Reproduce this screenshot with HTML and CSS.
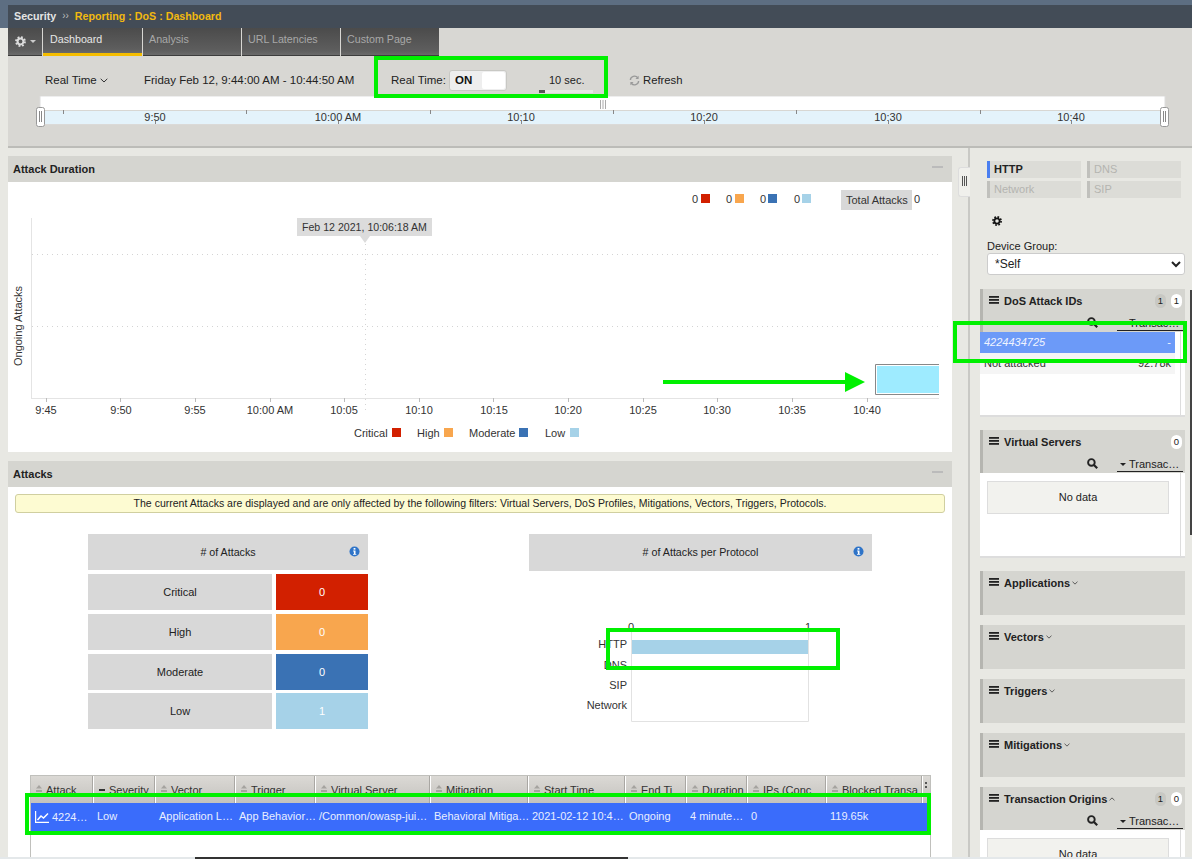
FILE: index.html
```html
<!DOCTYPE html>
<html>
<head>
	<meta charset="utf-8">
	<title>Security - Reporting : DoS : Dashboard</title>
	<link rel="stylesheet" href="styles.css">
</head>
<body>
<svg class="sprite">
	<symbol id="gear" viewBox="0 0 12 12">
		<circle cx="6" cy="6" r="3.2" fill="none" stroke="currentColor" stroke-width="2.2"/>
		<circle cx="6" cy="6" r="4.9" fill="none" stroke="currentColor" stroke-width="2" stroke-dasharray="2 1.85"/>
	</symbol>
	<symbol id="bars" viewBox="0 0 10 8">
		<rect width="10" height="1.8" y="0"/><rect width="10" height="1.8" y="3"/><rect width="10" height="1.8" y="6"/>
	</symbol>
	<symbol id="search" viewBox="0 0 11 11">
		<circle cx="4.4" cy="4.4" r="3.3" fill="none" stroke="currentColor" stroke-width="1.9"/>
		<path d="M7 7l3.2 3.2" stroke="currentColor" stroke-width="2.2"/>
	</symbol>
	<symbol id="info" viewBox="0 0 12 12">
		<circle cx="6" cy="6" r="5.5" fill="#2f74c8"/>
		<rect x="5" y="2.2" width="2" height="1.8" fill="#fff"/>
		<path d="M4.5 5h2.6v3.6h.9v1H4.4v-1h.9V6H4.500z" fill="#fff"/>
	</symbol>
	<symbol id="chev" viewBox="0 0 8 5">
		<path d="M.7.8L4 4l3.300-3.200" fill="none" stroke="currentColor" stroke-width="1"/>
	</symbol>
	<symbol id="sort" viewBox="0 0 6 9">
		<path d="M3 0l3 3.500H0z" fill="#a5a39f"/><path d="M0 5h6v2H0z" fill="#a5a39f"/>
	</symbol>
</svg>

<div class="page">
	<div class="chrome">
		<div class="crumbs"><span class="crumb-root">Security</span><span class="crumb-sep">››</span><span class="crumb-cur">Reporting : DoS : Dashboard</span></div>
	</div>

	<div class="tabs">
		<div class="tab-gear">
			<svg class="ico-gear"><use href="#gear"/></svg>
			<span class="caret"></span>
		</div>
		<div class="tab tab-on">Dashboard</div>
		<div class="tab">Analysis</div>
		<div class="tab">URL Latencies</div>
		<div class="tab">Custom Page</div>
	</div>

	<div class="toolbar">
		<div class="toolrow">
			<div class="rt-select">Real Time <svg class="ico-chev"><use href="#chev"/></svg></div>
			<div class="rt-range">Friday Feb 12, 9:44:00 AM - 10:44:50 AM</div>
			<div class="rt-label">Real Time:</div>
			<div class="toggle"><b>ON</b><i></i></div>
			<div class="rt-rate">10 sec.<span class="rate-track"><span class="rate-knob"></span></span></div>
			<div class="refresh">
				<svg class="ico-refresh" viewBox="0 0 12 12">
					<path d="M1.500 5.500A4.500 4.500 0 0 1 9.500 3" fill="none" stroke="#999" stroke-width="1.500"/>
					<path d="M10.500 .8v3.500H7z" fill="#999"/>
					<path d="M10.500 6.500A4.500 4.500 0 0 1 2.500 9" fill="none" stroke="#999" stroke-width="1.500"/>
					<path d="M1.500 11.200V7.700H5z" fill="#999"/>
				</svg>
				Refresh
			</div>
		</div>
		<svg class="timeline" viewBox="8 96 1184 34">
			<rect x="40" y="96" width="1125" height="14" fill="#fff"/>
			<rect x="40" y="96" width="1125" height="28" fill="none" stroke="#ddd"/>
			<rect x="41" y="111" width="1123" height="13" fill="#e4f3fb"/>
			<g stroke="#888">
				<path d="M63.500 110v4M246.500 110v4M430.500 110v4M613.500 110v4M796.500 110v4M980.500 110v4M1163.500 110v4"/>
				<path d="M155.500 121v3M338.500 121v3M521.500 121v3M704.500 121v3M888.500 121v3M1071.500 121v3"/>
			</g>
			<g class="tl-text" text-anchor="middle">
				<text x="155" y="121">9:50</text>
				<text x="338" y="121">10:00 AM</text>
				<text x="521" y="121">10:10</text>
				<text x="704" y="121">10:20</text>
				<text x="888" y="121">10:30</text>
				<text x="1071" y="121">10:40</text>
			</g>
			<path d="M600.500 100v9M603 100v9M605.500 100v9" stroke="#aaa"/>
			<g fill="#fff" stroke="#999">
				<rect x="36.500" y="107.500" width="8" height="19" rx="2"/>
				<rect x="1160.500" y="107.500" width="8" height="19" rx="2"/>
			</g>
			<path d="M39.500 111v11M41.500 111v11M1163.500 111v11M1165.500 111v11" stroke="#888"/>
		</svg>
	</div>

	<div class="main">
		<div class="content">
			<section class="panel">
				<header class="panel-head">Attack Duration<span class="panel-min"></span></header>
				<svg class="duration" viewBox="8 182 944 270">
					<g fill="#d22000"><rect x="701" y="194" width="9" height="9"/><rect x="392" y="428" width="9" height="9"/></g>
					<g fill="#f8a64e"><rect x="735" y="194" width="9" height="9"/><rect x="444" y="428" width="9" height="9"/></g>
					<g fill="#3a72b4"><rect x="768" y="194" width="9" height="9"/><rect x="519" y="428" width="9" height="9"/></g>
					<g fill="#a6d2e8"><rect x="802" y="194" width="9" height="9"/><rect x="570" y="428" width="9" height="9"/></g>
					<g class="ch-text">
						<text x="692" y="203">0</text><text x="726" y="203">0</text>
						<text x="760" y="203">0</text><text x="794" y="203">0</text>
						<rect x="841" y="190" width="71" height="20" fill="#d8d8d8"/>
						<text x="846" y="204">Total Attacks</text>
						<text x="914" y="203">0</text>
						<text x="354" y="437">Critical</text><text x="417" y="437">High</text>
						<text x="469" y="437">Moderate</text><text x="545" y="437">Low</text>
						<text transform="translate(22 326) rotate(-90)" text-anchor="middle">Ongoing Attacks</text>
					</g>
					<path d="M31.500 218v180M31 398.500h908" stroke="#e4e4e4"/>
					<path d="M32 254.500h907M32 326.500h907M365.500 244v168" stroke="#d4d4d4" stroke-dasharray="1 4"/>
					<path d="M46.500 398v4M120.500 398v4M195.500 398v4M270.500 398v4M344.500 398v4M419.500 398v4M493.500 398v4M568.500 398v4M643.500 398v4M717.500 398v4M792.500 398v4M867.500 398v4" stroke="#bbb"/>
					<g class="ch-text" text-anchor="middle">
						<text x="46" y="414">9:45</text><text x="121" y="414">9:50</text>
						<text x="195" y="414">9:55</text><text x="270" y="414">10:00 AM</text>
						<text x="344" y="414">10:05</text><text x="419" y="414">10:10</text>
						<text x="494" y="414">10:15</text><text x="568" y="414">10:20</text>
						<text x="643" y="414">10:25</text><text x="717" y="414">10:30</text>
						<text x="792" y="414">10:35</text><text x="867" y="414">10:40</text>
					</g>
					<path d="M297 218h135v18h-62l-5 7-5-7h-63z" fill="#dcdcdc"/>
					<text class="ch-text tip-text" x="302" y="231">Feb 12 2021, 10:06:18 AM</text>
					<path d="M939 364.500h-63.500v30H939" fill="#fff" stroke="#888"/>
					<rect x="877" y="366" width="62" height="27" fill="#9eebff"/>
					<path d="M663 380h182v-8l20 10-20 10v-8H663z" fill="#00f000"/>
				</svg>
			</section>

			<section class="panel panel-attacks">
				<header class="panel-head">Attacks<span class="panel-min"></span></header>
				<div class="attacks">
					<div class="notice">The current Attacks are displayed and are only affected by the following filters: Virtual Servers, DoS Profiles, Mitigations, Vectors, Triggers, Protocols.</div>
					<div class="widgets">
						<div class="sev">
							<div class="widget-head">
								# of Attacks
								<svg class="ico-info"><use href="#info"/></svg>
							</div>
							<div class="sev-row"><div class="sev-name">Critical</div><div class="sev-val s-crit">0</div></div>
							<div class="sev-row"><div class="sev-name">High</div><div class="sev-val s-high">0</div></div>
							<div class="sev-row"><div class="sev-name">Moderate</div><div class="sev-val s-mod">0</div></div>
							<div class="sev-row"><div class="sev-name">Low</div><div class="sev-val s-low">1</div></div>
						</div>
						<div class="proto">
							<div class="widget-head">
								# of Attacks per Protocol
								<svg class="ico-info"><use href="#info"/></svg>
							</div>
							<svg class="proto-chart" viewBox="529 571 343 158">
								<g class="ch-text" text-anchor="middle">
									<text x="631" y="631">0</text><text x="808" y="631">1</text>
								</g>
								<path d="M631.500 632v89.500h177V632" fill="#fff" stroke="#e2e2e2"/>
								<rect x="632" y="640" width="176" height="14" fill="#a6d2e8"/>
								<g class="ch-text" text-anchor="end">
									<text x="627" y="648">HTTP</text><text x="627" y="669">DNS</text>
									<text x="627" y="689">SIP</text><text x="627" y="709">Network</text>
								</g>
							</svg>
						</div>
					</div>

					<div class="grid">
						<div class="grid-row grid-head">
							<div class="th"><svg class="ico-sort"><use href="#sort"/></svg>Attack</div>
							<div class="th"><span class="sort-on"></span>Severity</div>
							<div class="th"><svg class="ico-sort"><use href="#sort"/></svg>Vector</div>
							<div class="th"><svg class="ico-sort"><use href="#sort"/></svg>Trigger</div>
							<div class="th"><svg class="ico-sort"><use href="#sort"/></svg>Virtual Server</div>
							<div class="th"><svg class="ico-sort"><use href="#sort"/></svg>Mitigation</div>
							<div class="th"><svg class="ico-sort"><use href="#sort"/></svg>Start Time</div>
							<div class="th"><svg class="ico-sort"><use href="#sort"/></svg>End Ti</div>
							<div class="th"><svg class="ico-sort"><use href="#sort"/></svg>Duration</div>
							<div class="th"><svg class="ico-sort"><use href="#sort"/></svg>IPs (Conc</div>
							<div class="th"><svg class="ico-sort"><use href="#sort"/></svg>Blocked Transa</div>
							<div class="th th-more"></div>
						</div>
						<div class="grid-row grid-sel">
							<div class="td td-first">
								<svg class="ico-trend" viewBox="0 0 14 12"><path d="M.6 0v11.400H14" fill="none" stroke="#fff" stroke-width="1.200"/><path d="M2.500 9l3.500-4 2.500 2L13 2.500" fill="none" stroke="#fff" stroke-width="1.500"/></svg>4224…
							</div>
							<div class="td">Low</div>
							<div class="td">Application L…</div>
							<div class="td">App Behavior…</div>
							<div class="td">/Common/owasp-jui…</div>
							<div class="td">Behavioral Mitiga…</div>
							<div class="td">2021-02-12 10:4…</div>
							<div class="td">Ongoing</div>
							<div class="td">4 minute…</div>
							<div class="td">0</div>
							<div class="td">119.65k</div>
							<div class="td"></div>
						</div>
					</div>
				</div>
			</section>
		</div>

		<aside class="side">
			<div class="side-handle"><i></i><i></i><i></i></div>
			<div class="side-top">
				<div class="proto-tabs">
					<div class="ptab ptab-on">HTTP</div>
					<div class="ptab">DNS</div>
					<div class="ptab">Network</div>
					<div class="ptab">SIP</div>
				</div>
				<svg class="side-gear"><use href="#gear"/></svg>
				<label class="dg-label">Device Group:</label>
				<select class="dg-select"><option>*Self</option></select>
			</div>

			<div class="fpanel fp-ids">
				<div class="fhead">
					<div class="ftitle">
						<svg class="ico-bars"><use href="#bars"/></svg>DoS Attack IDs
						<span class="badges"><span class="badge badge-grey">1</span><span class="badge">1</span></span>
					</div>
					<div class="ftools"><svg class="ico-search"><use href="#search"/></svg><span class="fsort"><span class="caret-dn"></span>Transac…</span></div>
				</div>
				<div class="fbody">
					<div class="flist">
						<div class="frow frow-sel"><em>4224434725</em><span>-</span></div>
						<div class="frow frow-alt"><span>Not attacked</span><span>92.78k</span></div>
					</div>
				</div>
			</div>

			<div class="fpanel fp-vs">
				<div class="fhead">
					<div class="ftitle">
						<svg class="ico-bars"><use href="#bars"/></svg>Virtual Servers
						<span class="badges"><span class="badge">0</span></span>
					</div>
					<div class="ftools"><svg class="ico-search"><use href="#search"/></svg><span class="fsort"><span class="caret-dn"></span>Transac…</span></div>
				</div>
				<div class="fbody">
					<div class="flist"><div class="nodata">No data</div></div>
				</div>
			</div>

			<div class="fpanel fp-closed"><div class="fhead"><div class="ftitle"><svg class="ico-bars"><use href="#bars"/></svg>Applications<svg class="ico-chev ftitle-chev"><use href="#chev"/></svg></div></div></div>
			<div class="fpanel fp-closed"><div class="fhead"><div class="ftitle"><svg class="ico-bars"><use href="#bars"/></svg>Vectors<svg class="ico-chev ftitle-chev"><use href="#chev"/></svg></div></div></div>
			<div class="fpanel fp-closed"><div class="fhead"><div class="ftitle"><svg class="ico-bars"><use href="#bars"/></svg>Triggers<svg class="ico-chev ftitle-chev"><use href="#chev"/></svg></div></div></div>
			<div class="fpanel fp-closed"><div class="fhead"><div class="ftitle"><svg class="ico-bars"><use href="#bars"/></svg>Mitigations<svg class="ico-chev ftitle-chev"><use href="#chev"/></svg></div></div></div>

			<div class="fpanel fp-origins">
				<div class="fhead">
					<div class="ftitle">
						<svg class="ico-bars"><use href="#bars"/></svg>Transaction Origins<svg class="ico-chev ftitle-chev chev-up"><use href="#chev"/></svg>
						<span class="badges"><span class="badge badge-grey">1</span><span class="badge">0</span></span>
					</div>
					<div class="ftools"><svg class="ico-search"><use href="#search"/></svg><span class="fsort"><span class="caret-dn"></span>Transac…</span></div>
				</div>
				<div class="fbody">
					<div class="flist"><div class="nodata">No data</div></div>
				</div>
			</div>
		</aside>
	</div>

	<!-- annotations drawn over the screenshot -->
	<div class="mark mark-rt"></div>
	<div class="mark mark-id"></div>
	<div class="mark mark-bar"></div>
	<div class="mark mark-row"></div>

	<div class="vscroll"></div>
	<div class="hscroll"><span></span></div>
</div>
</body>
</html>
```

FILE: styles.css
```css
html, body {
	margin: 0;
	padding: 0;
	background: #e8e8e3;
}
body {
	font-family: "Liberation Sans", Arial, sans-serif;
	font-size: 11px;
	color: #222;
}
.sprite { display: none; }
svg { display: block; }

.page {
	position: relative;
	width: 1192px;
	height: 859px;
	overflow: hidden;
}

/* header */
.chrome {
	background: #5d6e82;
	padding: 5px 0 0 8px;
}
.crumbs {
	box-sizing: border-box;
	display: flex;
	align-items: center;
	height: 23px;
	padding: 0 0 2px 6px;
	background: #434c57;
	font-size: 10.7px;
	font-weight: bold;
}
.crumb-root { color: #e4e4e4; }
.crumb-sep { color: #bbb; margin: 0 6px; font-weight: normal; font-size: 10px; }
.crumb-cur { color: #f2b90f; }

.tabs {
	display: flex;
	gap: 1px;
	height: 28px;
	margin-left: 8px;
	background: #d8d7d3;
}
.tab-gear, .tab {
	box-sizing: border-box;
	height: 28px;
	background: linear-gradient(#4b4b4b, #5e5e5e 85%, #6a6a6a);
	border-bottom: 1px solid #3c3c3c;
	color: #a8a8a8;
}
.tab-gear {
	display: flex;
	align-items: center;
	width: 34px;
	padding-left: 7px;
	color: #ddd;
}
.ico-gear { width: 11px; height: 11px; margin-right: 4px; }
.caret {
	border-top: 3px solid #ccc;
	border-left: 3px solid transparent;
	border-right: 3px solid transparent;
}
.tab {
	width: 98px;
	padding: 5px 0 0 6px;
	font-size: 10.7px;
}
.tab-on {
	width: 99px;
	padding-left: 7px;
	color: #e6e6e6;
	border-bottom: 3px solid #f5bd00;
}

/* toolbar */
.toolbar {
	box-sizing: border-box;
	height: 92px;
	margin-left: 8px;
	padding-top: 13px;
	background: #d8d7d3;
	border-bottom: 2px solid #bcbcb8;
}
.toolrow {
	display: flex;
	align-items: center;
	height: 22px;
	padding-left: 37px;
	font-size: 11.5px;
}
.rt-select { display: flex; align-items: center; width: 99px; }
.ico-chev { width: 8px; height: 5px; margin-left: 3px; color: #333; }
.rt-range { width: 230px; }
.rt-label { width: 58px; margin-left: 17px; }
.toggle {
	box-sizing: border-box;
	display: flex;
	width: 58px;
	height: 21px;
	padding: 1px;
	background: #eee;
	border: 1px solid #c8c8c4;
	border-radius: 3px;
}
.toggle b { width: 27px; padding-left: 4px; line-height: 17px; color: #111; }
.toggle i { flex: 1; background: #fff; border-radius: 2px; }
.rt-rate {
	position: relative;
	width: 81px;
	margin-left: 42px;
	font-size: 11px;
}
.rate-track {
	position: absolute;
	left: -10px;
	top: 16px;
	width: 54px;
	height: 3px;
	background: #e8e8e6;
}
.rate-knob {
	display: block;
	width: 6px;
	height: 3px;
	background: #555;
}
.refresh { display: flex; align-items: center; margin-left: -1px; font-size: 11.3px; }
.ico-refresh { width: 11px; height: 11px; margin-right: 3px; }
.timeline { width: 1184px; height: 34px; margin-top: 5px; }
.tl-text, .ch-text { font-size: 11px; fill: #333; }
.tip-text { font-size: 10.6px; }

/* main */
.main { display: flex; }
.content {
	width: 944px;
	margin: 8px 0 0 8px;
}
.panel { background: #fff; }
.panel-attacks { margin-top: 9px; height: 400px; }
.panel-head {
	position: relative;
	height: 26px;
	padding-left: 5px;
	background: #d5d5d0;
	font-weight: bold;
	line-height: 26px;
	color: #222;
}
.panel-min {
	position: absolute;
	right: 9px;
	top: 10px;
	width: 11px;
	height: 2px;
	background: #bbb;
}
.duration { width: 944px; height: 270px; }

.attacks { padding-top: 7px; }
.notice {
	box-sizing: border-box;
	height: 19px;
	margin: 0 7px;
	background: #fdfbd2;
	border: 1px solid #d0cfa0;
	border-radius: 3px;
	font-size: 10.52px;
	line-height: 17px;
	text-align: center;
	color: #222;
}
.widgets {
	display: flex;
	gap: 161px;
	margin: 21px 0 0 80px;
	height: 195px;
}
.sev { width: 280px; }
.proto { width: 343px; }
.widget-head {
	position: relative;
	height: 36px;
	background: #d8d8d8;
	font-size: 10.7px;
	line-height: 36px;
	text-align: center;
}
.proto .widget-head { height: 37px; }
.ico-info {
	position: absolute;
	right: 8px;
	top: 12px;
	width: 11px;
	height: 11px;
}
.sev-row {
	display: flex;
	gap: 4px;
	height: 36px;
	margin-top: 4px;
	line-height: 36px;
	text-align: center;
}
.sev-row:last-child { margin-top: 3px; }
.sev-name { width: 184px; background: #d8d8d8; }
.sev-val { width: 92px; color: #fff; }
.s-crit { background: #d22000; }
.s-high { background: #f8a64e; }
.s-mod { background: #3a72b4; }
.s-low { background: #a6d2e8; }
.proto-chart { width: 343px; height: 158px; }

/* attacks table */
.grid {
	box-sizing: border-box;
	width: 901px;
	height: 90px;
	margin: 46px 0 0 22px;
	border: 1px solid #c0c0bc;
	border-width: 1px 1px 0;
}
.grid-row {
	display: grid;
	grid-template-columns: 63px 62px 80px 80px 115px 98px 97px 61px 61px 79px 96px 7px;
}
.grid-head {
	height: 27px;
	background: linear-gradient(#dbd9d5, #c4c2be);
}
.th {
	box-sizing: border-box;
	display: flex;
	align-items: center;
	padding-left: 5px;
	border-right: 1px solid #fff;
	box-shadow: inset -1px 0 #a9a7a3;
	white-space: nowrap;
	overflow: hidden;
	color: #333;
}
.th-more { position: relative; border-right: 0; box-shadow: none; }
.th-more::before {
	content: "";
	position: absolute;
	left: 2px;
	top: 6px;
	width: 2px;
	height: 2px;
	background: #555;
	box-shadow: 0 4px #555;
}
.ico-sort { width: 6px; height: 9px; margin-right: 4px; flex: none; }
.sort-on {
	flex: none;
	width: 6px;
	height: 2px;
	margin-right: 4px;
	background: #333;
}
.grid-sel {
	height: 28px;
	background: #3a6cfb;
	color: #e8eeff;
	line-height: 27px;
}
.td { padding-left: 3px; white-space: nowrap; }
.td-first { display: flex; align-items: center; padding-left: 4px; }
.ico-trend { width: 14px; height: 12px; margin-right: 3px; }

/* right sidebar */
.side {
	position: relative;
	box-sizing: border-box;
	width: 224px;
	margin-left: 16px;
	border-left: 2px solid #c9c9c5;
	height: 711px;
}
.side-handle {
	position: absolute;
	left: -12px;
	top: 19px;
	box-sizing: border-box;
	display: flex;
	gap: 1px;
	justify-content: center;
	width: 12px;
	height: 30px;
	padding-top: 8px;
	background: #f0f0ec;
	border: 1px solid #ddd;
	border-right: 0;
	border-radius: 3px 0 0 3px;
}
.side-handle i { width: 1px; height: 10px; background: #555; }
.side-top {
	height: 128px;
	padding: 13px 0 0 17px;
}
.proto-tabs {
	display: grid;
	grid-template-columns: 94px 94px;
	grid-auto-rows: 17px;
	gap: 3px 6px;
}
.ptab {
	box-sizing: border-box;
	padding-left: 4px;
	background: #dcdcd7;
	border-left: 3px solid #c0c0bc;
	line-height: 17px;
	color: #b4b4b0;
}
.ptab-on {
	border-left-color: #4a7ef0;
	font-weight: bold;
	color: #222;
}
.side-gear {
	width: 10px;
	height: 10px;
	margin: 18px 0 0 5px;
	color: #111;
}
.dg-label { display: block; margin-top: 14px; line-height: 13px; }
.dg-select {
	box-sizing: border-box;
	display: block;
	width: 198px;
	height: 22px;
	padding-left: 3px;
	background-color: #fff;
	border: 1px solid #ccc;
	border-radius: 3px;
	font-family: inherit;
	font-size: 12px;
	color: #222;
}

.fpanel { width: 205px; margin-left: 10px; }
.fp-ids { height: 128px; }
.fp-vs { height: 130px; margin-top: 13px; }
.fp-closed { height: 44px; margin-top: 10px; }
.fp-vs + .fp-closed { margin-top: 11px; }
.fp-origins { margin-top: 10px; }
.fhead {
	box-sizing: border-box;
	height: 43px;
	background: #d5d5d0;
	border-left: 3px solid #b5b5b0;
}
.fp-closed .fhead { height: 44px; }
.ftitle {
	display: flex;
	align-items: center;
	height: 24px;
	padding-left: 6px;
	font-weight: bold;
	color: #222;
}
.ico-bars { width: 10px; height: 8px; margin: 0 5px 2px 0; fill: #222; }
.ftitle-chev { width: 6px; height: 4px; margin-left: 2px; }
.chev-up { transform: scaleY(-1); }
.badges { display: flex; gap: 5px; margin-left: auto; margin-right: 3px; }
.badge {
	box-sizing: border-box;
	width: 11px;
	height: 14px;
	background: #fff;
	border-radius: 6px;
	font-size: 9.500px;
	font-weight: normal;
	line-height: 14px;
	text-align: center;
}
.badge-grey { background: #c8c8c3; }
.ftools {
	display: flex;
	align-items: flex-end;
	height: 19px;
}
.ico-search { width: 11px; height: 11px; margin-left: 104px; align-self: center; color: #222; }
.fsort {
	display: flex;
	align-items: center;
	box-sizing: border-box;
	width: 66px;
	height: 15px;
	margin: 0 0 1px 19px;
	padding-left: 3px;
	border-bottom: 1px solid #222;
	white-space: nowrap;
	font-size: 11px;
}
.caret-dn {
	margin-right: 3px;
	border-top: 3px solid #222;
	border-left: 3px solid transparent;
	border-right: 3px solid transparent;
}
.fbody {
	box-sizing: border-box;
	height: 85px;
	padding-right: 4px;
	background: #fff;
	border-bottom: 2px solid #ddd;
}
.fp-origins .fbody { height: 120px; border-bottom: 0; }
.flist {
	box-sizing: border-box;
	height: 100%;
	padding-right: 5px;
	border-right: 1px solid #ddd;
	overflow: hidden;
}
.frow {
	display: flex;
	justify-content: space-between;
	height: 21px;
	padding: 0 4px;
	line-height: 21px;
}
.frow-sel { background: #6c9af8; color: #f0f4ff; }
.frow-alt { background: #f5f5f5; color: #333; }
.nodata {
	box-sizing: border-box;
	width: 182px;
	height: 33px;
	margin: 8px 0 0 7px;
	background: #f2f2ee;
	border: 1px solid #ddd;
	line-height: 31px;
	text-align: center;
}

/* green annotation boxes */
.mark {
	position: absolute;
	box-sizing: border-box;
	border: 4px solid #00f000;
}
.mark-rt { left: 374px; top: 56px; width: 234px; height: 42px; }
.mark-id { left: 953px; top: 321px; width: 234px; height: 42px; }
.mark-bar { left: 606px; top: 628px; width: 234px; height: 42px; }
.mark-row { left: 25px; top: 793px; width: 906px; height: 42px; }

.vscroll {
	position: absolute;
	right: 0;
	top: 290px;
	width: 2px;
	height: 245px;
	background: #444;
}
.hscroll {
	position: absolute;
	left: 0;
	right: 0;
	bottom: 0;
	height: 2px;
	background: #e4e8ea;
}
.hscroll span {
	display: block;
	width: 433px;
	height: 2px;
	margin-left: 195px;
	background: #333;
}
```
